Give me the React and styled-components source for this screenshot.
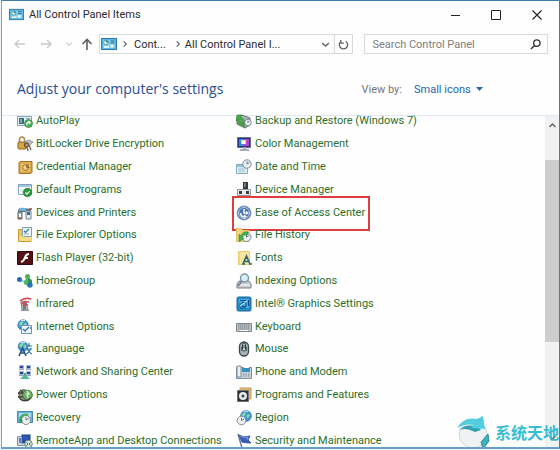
import React from "react";
import styled, { createGlobalStyle } from "styled-components";

const GlobalStyle = createGlobalStyle`
  *, *::before, *::after { box-sizing: border-box; }
  body {
    margin: 0;
    background: #f1f5f8;
    font-family: Roboto, "Open Sans", sans-serif;
    font-size: 11px;
    color: #333;
  }
  button, input, select { font: inherit; color: inherit; }
`;

const Window = styled.main`
  position: relative;
  display: flex;
  flex-direction: column;
  height: calc(100vh - 1px);
  margin: 0 0 1px 1px;
  border: 1px solid #3f7fad;
  border-left-color: #69a5ce;
  border-bottom-width: 2px;
  border-bottom-color: #65a0c9;
  background: #fefefe;
  overflow: hidden;
`;

const TitleBar = styled.header`
  display: flex;
  align-items: center;
  flex: none;
  height: 27px;
  padding-left: 7px;
  gap: 5px;
`;

const Title = styled.span`
  flex: 1;
  color: #2b2b2b;
`;

const Controls = styled.div`
  display: flex;
  margin-right: 1px;
`;

const IconButton = styled.button`
  display: flex;
  align-items: center;
  justify-content: center;
  flex: none;
  width: ${(p) => p.$width}px;
  height: 19px;
  padding: 0;
  border: 0;
  border-left: ${(p) => (p.$divided ? "1px solid #d9d9d9" : "0")};
  background: none;
  color: ${(p) => p.$color || "#666"};
`;

const NavBar = styled.nav`
  display: flex;
  align-items: center;
  flex: none;
  height: 32px;
  padding: 0 11px 0 8px;
`;

const Address = styled.div`
  display: flex;
  align-items: center;
  flex: 252 1 0;
  height: 20px;
  margin-left: 1px;
  padding-left: 1px;
  border: 1px solid #d9d9d9;
`;

const Crumb = styled.button`
  padding: 0 6px 0 1px;
  border: 0;
  background: none;
  color: #2b2b2b;
  white-space: nowrap;
`;

const Spacer = styled.span`
  flex: 1;
`;

const Search = styled.label`
  display: flex;
  align-items: center;
  flex: 169 1 0;
  min-width: 0;
  height: 20px;
  margin-left: 11px;
  padding: 0 6px 0 7px;
  border: 1px solid #d9d9d9;
`;

const SearchInput = styled.input`
  flex: 1;
  min-width: 0;
  padding: 0;
  border: 0;
  outline: 0;
  background: none;
  &::placeholder { color: #7d7d7d; opacity: 1; }
`;

const Heading = styled.section`
  display: flex;
  align-items: center;
  flex: none;
  height: 55px;
  padding: 3px 76px 0 15px;
`;

const PageTitle = styled.h1`
  flex: 1;
  margin: 0;
  color: #2a4d93;
  font-family: "Open Sans", "Noto Sans", sans-serif;
  font-size: 14px;
  font-weight: 400;
  line-height: 20px;
`;

const ViewLabel = styled.label`
  display: flex;
  align-items: center;
  gap: 12px;
  color: #757575;
`;

const ViewSelect = styled.select`
  appearance: none;
  padding: 0;
  border: 0;
  background: none;
  color: #2765ad;
`;

const Body = styled.section`
  display: flex;
  flex: 1;
  min-height: 0;
  border-top: 1px solid #e0eaf3;
`;

const Items = styled.ul`
  display: grid;
  grid-auto-flow: column;
  grid-template-columns: 219px 1fr;
  grid-template-rows: repeat(15, 1fr);
  flex: 1;
  height: 342px;
  margin: -6px 0 0;
  padding: 0 0 0 15px;
  list-style: none;
`;

const Item = styled.li`
  position: relative;
  display: flex;
  align-items: center;
`;

const ItemLink = styled.a`
  display: flex;
  align-items: center;
  gap: 3px;
  color: #2c6f2c;
  line-height: 16px;
  text-decoration: none;
  white-space: nowrap;
`;

const Highlight = styled.span`
  position: absolute;
  top: -5px;
  left: -4px;
  width: 138px;
  height: 35px;
  border: 2px solid #df3c3f;
  pointer-events: none;
`;

const Glyph = styled.svg`
  display: block;
  flex: none;
`;

const Scrollbar = styled.div`
  display: flex;
  flex-direction: column;
  align-items: center;
  width: 14px;
  background: #f1f1f1;
`;

const Thumb = styled.div`
  flex: 183 1 0;
  align-self: stretch;
  background: #cdcdcd;
`;

const Track = styled.div`
  flex: ${(p) => p.$grow} 1 0;
`;

const Watermark = styled.div`
  position: absolute;
  right: 0;
  bottom: -2px;
  display: flex;
  align-items: center;
  gap: 5px;
  color: #38bdd2;
  font-family: "Noto Sans CJK SC", sans-serif;
  font-size: 16px;
  font-weight: 700;
  line-height: 34px;
`;

const Check = ({ x, y, r = 4 }) => (
  <g>
    <circle cx={x} cy={y} r={r} fill="#24983b" stroke="#137026" strokeWidth=".5" />
    <path d={`M${x - 2} ${y}l1.5 1.6 2.7-3`} fill="none" stroke="#fff" strokeWidth="1.2" />
  </g>
);

const Clock = ({ x, y, r }) => (
  <g>
    <circle cx={x} cy={y} r={r} fill="#edf1f4" stroke="#7e8d98" />
    <path d={`M${x} ${y - r + 1.5}V${y}l${r - 1.8}-1.5`} fill="none" stroke="#566671" strokeWidth=".9" />
  </g>
);

const Globe = ({ x, y, r }) => (
  <g>
    <circle cx={x} cy={y} r={r} fill="#3f9bd5" stroke="#2b6da8" strokeWidth=".7" />
    <path d={`M${x - r + 1} ${y - 1}l2-2.5 2.5.5-1 2-1.5 2zM${x + 1} ${y - 1}l2-1 .8 1.5-1.8 2.5-1.5-1z`} fill="#90d7a5" />
    <path d={`M${x - 2} ${y - r + 1}q2-1 4 0`} stroke="#d9f2fc" fill="none" />
  </g>
);

const art = {
  panel: (
    <>
      <rect x=".5" y="2.5" width="15" height="11" fill="#55b7e4" stroke="#347ca5" />
      <path d="M2 4h12v8H2z" fill="#81d0f0" />
      <circle cx="5" cy="6.5" r="2.3" fill="#e7f6db" stroke="#307e9e" strokeWidth=".7" />
      <path d="M5 6.500V4.200a2.300 2.300 0 0 1 2.300 2.300z" fill="#258c84" />
      <path d="M9.500 5h4M9.500 7h4" stroke="#275f83" />
      <circle cx="11" cy="10" r="1.500" fill="#fff" />
      <path d="M3 11h5" stroke="#fff" strokeWidth="1.500" />
    </>
  ),
  autoplay: (
    <>
      <path d="M.5 3.500h14v9H.5z" fill="#eaf0f3" stroke="#8ca0aa" />
      <path d="M2 5h5v6H2z" fill="#3c657f" />
      <path d="M3 6h2v4H3z" fill="#72b2b5" />
      <path d="M9 5.500h4M9 7.500h3" stroke="#8ba6b7" />
      <circle cx="11.500" cy="10.500" r="4" fill="#48ac56" stroke="#23783a" strokeWidth=".6" />
      <path d="M10 12.500c-1-3 1-4 3-3m-1.500-1.500 2 1.500-1.800 1.600" fill="none" stroke="#fff" strokeWidth="1.100" />
    </>
  ),
  bitlocker: (
    <>
      <path d="M2.500 7V4q0-3 2.500-3t2.500 3v3" fill="none" stroke="#ac8c48" strokeWidth="1.600" />
      <rect x="1" y="6" width="8" height="7" rx="1" fill="#d8a63a" stroke="#8e641e" />
      <path d="m7 6 5-2 4 2-4 4-4-2z" fill="#bac0c5" stroke="#787f87" strokeWidth=".7" />
      <circle cx="9.500" cy="9" r="2" fill="none" stroke="#76562f" strokeWidth="1.300" />
      <path d="m10 11 1 4m1-6 2 5" stroke="#6f685f" strokeWidth="1.400" />
    </>
  ),
  credential: (
    <>
      <path d="M3 2.500h12v11l-2 1H2v-11z" fill="#d7a748" stroke="#a57527" />
      <path d="M4 4.500h9v8H4z" fill="#eac777" />
      <circle cx="8.500" cy="8.500" r="3" fill="none" stroke="#a17024" />
      <path d="m8.500 8.500 3-3M8.500 8.500h4" stroke="#865a19" strokeWidth="1.200" />
      <circle cx="8.500" cy="8.500" r="1" fill="#fff0be" />
    </>
  ),
  defaults: (
    <>
      <path d="M1.500 2.500h13v10h-13z" fill="#f8fbfe" stroke="#83a0b6" />
      <path d="M2 3h12v2H2z" fill="#9fc8e5" />
      <path d="M3 7h4v3H3z" fill="#e4ebef" />
      <path d="M9 7h4" stroke="#d58d67" />
      <Check x={10.5} y={10.5} r={4.3} />
    </>
  ),
  devices: (
    <>
      <path d="M1 5q1-3 6-2l7 1v3H1z" fill="#5e7481" />
      <path d="M2 3h7v3H2z" fill="#6bb1d9" />
      <path d="M1 7h4v7H1z" fill="#b9c1c7" stroke="#59646c" />
      <path d="M2 9h2v4H2z" fill="#fff" />
      <path d="M9 6h5v8H9z" fill="#e6ecef" stroke="#71818c" />
      <path d="M10 7h3v3h-3z" fill="#356f9c" />
      <path d="M1 13h3M12 4h3" stroke="#a04b45" strokeWidth="1.500" />
    </>
  ),
  explorer: (
    <>
      <path d="M1.500 2.500h5l1 2H14v10H1.500z" fill="#ecc75d" stroke="#c99c32" />
      <path d="M5.500.500h9v9h-9z" fill="#f1f8ff" stroke="#7ba0bc" />
      <path d="m7 4 1.500 1.500L12 2" fill="none" stroke="#3175b6" strokeWidth="1.200" />
      <path d="M7 7h5" stroke="#94aab8" />
      <path d="M2 9h4l1 1h7v4H2z" fill="#f6dc83" />
    </>
  ),
  flash: (
    <>
      <path d="M.5 1.500h15v13H.5z" fill="#541214" stroke="#35090d" />
      <path d="M12 4q-3 0-4 3.500T4 12M7 8h4" fill="none" stroke="#fff" strokeWidth="2" />
    </>
  ),
  homegroup: (
    <>
      <path d="m3 7 6 2 2-5" fill="none" stroke="#8fd0dc" strokeWidth="1.500" />
      <circle cx="2.500" cy="6.500" r="2.500" fill="#2868b8" />
      <circle cx="10.500" cy="3.500" r="2.500" fill="#4fae58" />
      <path d="m7 8 4-4 4 3v5l-4 1-4-2z" fill="#4fb768" />
      <path d="m11 5 4 3v5l-4-2z" fill="#2c8f5a" />
      <circle cx="13" cy="12" r="2.700" fill="#2874b6" />
    </>
  ),
  infrared: (
    <>
      <path d="m4 6 5-1 2 9H5z" fill="#b6c0c6" stroke="#7e8992" />
      <path d="m6 6 3-1v8l-3 1z" fill="#6c7a83" />
      <path d="M3 5q5-4 11-2M4 8q4-3 8-2M6 10q2-2 5-1" fill="none" stroke="#d64b55" strokeWidth="1.700" />
      <path d="M4 14.500h8" stroke="#8e979e" />
    </>
  ),
  internet: (
    <>
      <Globe x={6} y={6} r={5.2} />
      <path d="M4.500 6.500h10v8h-10z" fill="#edf6fb" stroke="#7294aa" />
      <path d="m6 10 2 2 4-4" fill="none" stroke="#3978b4" strokeWidth="1.400" />
      <path d="m13 8 1 1-1 1" stroke="#6789a1" />
    </>
  ),
  language: (
    <>
      <Globe x={6} y={5.5} r={4.8} />
      <path d="m2 15 3.500-8L9 15M3.500 12h4" fill="none" stroke="#244e80" strokeWidth="1.500" />
      <path d="M9 5h6M12 2v4M9 8h6m-5-1q2 5 5 6m-1-6q-2 5-5 6" fill="none" stroke="#3875aa" strokeWidth="1.200" />
    </>
  ),
  network: (
    <>
      <path d="M2.500 1.500h4v3h-4zm7 0h4v3h-4zm-7 6h4v3h-4zm7 0h4v3h-4z" fill="#2c3f96" stroke="#a8b8dc" />
      <path d="M2 5.500h5m2 0h5M2 11.500h5m2 0h5" stroke="#9aa6bb" />
      <path d="M8 9v5" stroke="#38a177" strokeWidth="2" />
      <path d="m8 10 5 5H3z" fill="#58b795" />
    </>
  ),
  power: (
    <>
      <path d="M2 5q4-4 8-1l1 7-5 3-4-3z" fill="#8c9a80" stroke="#455e4b" />
      <circle cx="10.500" cy="8" r="4.800" fill="#6fae6c" stroke="#417c45" />
      <path d="M1 6h5m-5 4h5M3 12q6 4 11-1M3 3l3 2" fill="none" stroke="#443f36" strokeWidth="1.500" />
      <path d="m10 4 2 3h-2l1 4" fill="none" stroke="#d8f0c8" strokeWidth="1.400" />
    </>
  ),
  recovery: (
    <>
      <path d="M.5 1.500h15v11H.5z" fill="#63b7df" stroke="#4987ac" />
      <path d="M2 3h12v4H2z" fill="#a6dcf1" />
      <Clock x={9} y={10} r={4.5} />
      <path d="M5 12C1 8 6 3 11 5" fill="none" stroke="#4baa56" strokeWidth="2" />
      <path d="m3 8 3 3-4 1z" fill="#339545" />
    </>
  ),
  remote: (
    <>
      <path d="M.5 3.500h8v9h-8z" fill="#cfdae6" stroke="#7690a6" />
      <path d="M2 5h5v5H2z" fill="#667fa0" />
      <path d="M4.500 1.500h9v9h-9z" fill="#234aa1" stroke="#8da2b9" />
      <path d="M6 3h5v4H6z" fill="#2f57c0" />
      <circle cx="11.500" cy="11" r="3.800" fill="#d7e2dc" stroke="#6d8c79" />
      <path d="m9.500 9.500 1.500 1.500-1.500 1.500m4-3-1.500 1.500 1.500 1.500" fill="none" stroke="#377b46" />
    </>
  ),
  backup: (
    <>
      <path d="m1 6 5-4 8 3v7l-5 3-8-4z" fill="#a9b3b4" stroke="#65706d" />
      <path d="m1 6 8 4v5l-8-4z" fill="#529a4d" />
      <path d="M1 2h5L4 4q5 2 5 7-3-5-7-5L0 8z" fill="#3eb344" stroke="#22782c" strokeWidth=".6" />
      <Clock x={12} y={9.5} r={3.3} />
    </>
  ),
  color: (
    <>
      <path d="M1.500 1.500h13v10h-13z" fill="#26318c" stroke="#666f8c" />
      <path d="M3 3h5v7H3z" fill="#2f8fe0" />
      <path d="M8 3h5v7H8z" fill="#b647cf" />
      <path d="M5 4h5v4H5z" fill="#efdd55" />
      <path d="M6 5h3v3H6z" fill="#fff" />
      <path d="M7 11h3v2h3v2H4v-2h3z" fill="#a4acb5" />
    </>
  ),
  date: (
    <>
      <path d="M.5 5.500h11v9H.5z" fill="#e7f4fa" stroke="#83adc0" />
      <path d="M1 6h10v2H1z" fill="#8fc3db" />
      <path d="M2 10h8M2 12h8M4 8v6M7 8v6" stroke="#accbd8" />
      <Clock x={11} y={5} r={4.2} />
    </>
  ),
  device: (
    <>
      <path d="M7 0h5v7H7z" fill="#303940" />
      <path d="M8 1h2v4H8z" fill="#6b7782" />
      <path d="M1.500 7.500h13v6h-13z" fill="#e8eaec" stroke="#8d969b" />
      <path d="M3 9h3v3H3zm7 0h3v3h-3z" fill="#343b3e" />
      <path d="M6 14h4" stroke="#868e94" strokeWidth="2" />
    </>
  ),
  ease: (
    <>
      <circle cx="8" cy="8" r="7" fill="#3761a9" stroke="#8a9fc2" />
      <circle cx="8" cy="8" r="5.500" fill="#4a73b8" stroke="#c4d5ed" />
      <path d="M8 4v4h3M4.500 8q0 4 4.500 3.500" fill="none" stroke="#fff" strokeWidth="1.500" />
      <path d="m10 6 3 2-3 2zM8 9.500l3 2-3 2z" fill="#fff" />
    </>
  ),
  history: (
    <>
      <path d="M.5 1.500h5l1 2H13v11H.5z" fill="#f3d57b" stroke="#e3c063" />
      <Clock x={10.5} y={10} r={4.5} />
      <path d="M12 5Q7 4 5 8.500L3 7.500v7l5-3-2-1q1-3 6-3z" fill="#42b54a" stroke="#298334" strokeWidth=".6" />
    </>
  ),
  fonts: (
    <>
      <path d="M2.500 1.500h11v13h-11z" fill="#f4db78" stroke="#e6cc6c" />
      <path d="M4 2h9v12H4z" fill="#f9e7a0" />
      <path d="m7 14 3.500-8L14 14M8 11.500h5M6 14h3m4 0h3" fill="none" stroke="#316a75" strokeWidth="1.700" />
    </>
  ),
  indexing: (
    <>
      <path d="m1 11 2-3h10l2 3v4H1z" fill="#c7cdd2" stroke="#79828a" />
      <path d="M2 12h12" stroke="#fff" />
      <circle cx="8.500" cy="5" r="4" fill="#d8eefb" stroke="#7b95a9" strokeWidth="1.400" />
      <path d="m6 8-4 5" stroke="#7a8290" strokeWidth="2" />
    </>
  ),
  intel: (
    <>
      <rect x="1" y="1" width="14" height="14" rx="1.500" fill="#208dce" stroke="#23628e" />
      <path d="M3 3h10v9H3z" fill="#46aee0" />
      <path d="M4 4.500h6M12.500 4v6M4 7v5h6M6 6.500h4v4H6z" fill="none" stroke="#174c86" />
      <path d="m4 10 7-5" stroke="#bff3ff" />
    </>
  ),
  keyboard: (
    <>
      <path d="M.5 4.500h15v8H.5z" fill="#c5cbd0" stroke="#7c858b" />
      <path d="M2 6h12M2 8h12M2 10h12" stroke="#68737a" strokeDasharray="1.500 .5" />
      <path d="M4 11.500h8" stroke="#f7f9fa" />
    </>
  ),
  mouse: (
    <>
      <rect x="3.500" y="1" width="9" height="14" rx="4.500" fill="#aab3b8" stroke="#38454e" strokeWidth="1.300" />
      <rect x="6.500" y="2" width="3" height="8" rx="1.500" fill="#e3e8ea" stroke="#263640" />
      <path d="M8 3.500v4" stroke="#263640" />
      <path d="M5.500 6v4M10.500 6v4" stroke="#56646c" />
    </>
  ),
  phone: (
    <>
      <path d="M.5 3.500h15v11H.5z" fill="#cad5dc" stroke="#8190a0" />
      <path d="M1 2h4v11H1z" fill="#eaf0f3" stroke="#7a8a98" />
      <path d="M6 4h8v4H6z" fill="#3a91b8" />
      <path d="M7 10h7M7 12h7" stroke="#72828f" strokeDasharray="1.500 1" />
      <path d="M8 2h5v2H8z" fill="#fff" />
    </>
  ),
  programs: (
    <>
      <path d="M4 1h11v11H4z" fill="#e0ba72" stroke="#c99b5c" />
      <path d="M1.500 3.500h11v11h-11z" fill="#2a3033" stroke="#6d7376" />
      <circle cx="7" cy="9" r="4" fill="#e4e8e9" />
      <circle cx="7" cy="9" r="1.500" fill="#3f484b" />
    </>
  ),
  region: (
    <>
      <Globe x={10} y={6} r={5.4} />
      <Clock x={5.5} y={10.5} r={4.3} />
    </>
  ),
  security: (
    <>
      <path d="m2 1 4 14" stroke="#687c9f" strokeWidth="1.500" />
      <path d="m3 2 5 2 6-1-2 4 3 3q-5 0-9-1z" fill="#315cb8" stroke="#3a53a8" />
      <path d="m4 3 5 2 3-1-1 3" fill="none" stroke="#789ae5" />
    </>
  ),
};

const Icon = ({ name, size = 16 }) => (
  <Glyph width={size} height={size} viewBox="0 0 16 16" aria-hidden="true">
    {art[name]}
  </Glyph>
);

const Line = ({ d, size = 12, weight = 1.3 }) => (
  <Glyph width={size} height={size} viewBox="0 0 12 12" fill="none" stroke="currentColor" strokeWidth={weight} aria-hidden="true">
    <path d={d} />
  </Glyph>
);

const items = [
  ["AutoPlay", "autoplay"],
  ["BitLocker Drive Encryption", "bitlocker"],
  ["Credential Manager", "credential"],
  ["Default Programs", "defaults"],
  ["Devices and Printers", "devices"],
  ["File Explorer Options", "explorer"],
  ["Flash Player (32-bit)", "flash"],
  ["HomeGroup", "homegroup"],
  ["Infrared", "infrared"],
  ["Internet Options", "internet"],
  ["Language", "language"],
  ["Network and Sharing Center", "network"],
  ["Power Options", "power"],
  ["Recovery", "recovery"],
  ["RemoteApp and Desktop Connections", "remote"],
  ["Backup and Restore (Windows 7)", "backup"],
  ["Color Management", "color"],
  ["Date and Time", "date"],
  ["Device Manager", "device"],
  ["Ease of Access Center", "ease"],
  ["File History", "history"],
  ["Fonts", "fonts"],
  ["Indexing Options", "indexing"],
  ["Intel® Graphics Settings", "intel"],
  ["Keyboard", "keyboard"],
  ["Mouse", "mouse"],
  ["Phone and Modem", "phone"],
  ["Programs and Features", "programs"],
  ["Region", "region"],
  ["Security and Maintenance", "security"],
];

export default function App() {
  return (
    <>
      <GlobalStyle />
      <Window>
        <TitleBar>
          <Icon name="panel" size={15} />
          <Title>All Control Panel Items</Title>
          <Controls>
            <IconButton $width={41} $color="#222" aria-label="Minimize"><Line d="M2 6.500h9" weight={1} /></IconButton>
            <IconButton $width={41} $color="#222" aria-label="Maximize"><Line d="M1.500 1.500h9v9h-9z" weight={1} /></IconButton>
            <IconButton $width={42} $color="#222" aria-label="Close"><Line d="m1.500 1.500 9 9m0-9-9 9" weight={1.1} /></IconButton>
          </Controls>
        </TitleBar>
        <NavBar>
          <IconButton $width={20} $color="#c9c9c9" aria-label="Back"><Line d="M11 6H1.500M5 2 1 6l4 4" /></IconButton>
          <IconButton $width={32} $color="#c9c9c9" aria-label="Forward"><Line d="M1 6h9.500M7 2l4 4-4 4" /></IconButton>
          <IconButton $width={14} $color="#c4c4c4" aria-label="Recent locations"><Line d="m2 4 4 4 4-4" size={8} weight={1.6} /></IconButton>
          <IconButton $width={22} $color="#606060" aria-label="Up"><Line d="M6 12V1.500M1.500 6 6 1.500 10.500 6" weight={1.6} /></IconButton>
          <Address>
            <Icon name="panel" />
            <IconButton $width={16} aria-label="Expand root"><Line d="m4 2 4 4-4 4" size={8} weight={1.8} /></IconButton>
            <Crumb>Cont...</Crumb>
            <IconButton $width={12} aria-label="Expand Control Panel"><Line d="m4 2 4 4-4 4" size={8} weight={1.8} /></IconButton>
            <Crumb>All Control Panel I...</Crumb>
            <Spacer />
            <IconButton $width={18} aria-label="Previous locations"><Line d="m1.500 4 4.500 4 4.500-4" size={9} weight={2} /></IconButton>
            <IconButton $width={18} $divided aria-label="Refresh"><Line d="M8.500 2.500a4.500 4.500 0 1 1-5 0M3 1v3.500h3.500" size={11} weight={1.5} /></IconButton>
          </Address>
          <Search>
            <SearchInput type="search" placeholder="Search Control Panel" aria-label="Search Control Panel" />
            <Line d="M5 7 1 11M11 4.500a3.500 3.500 0 1 1-7 0 3.500 3.500 0 0 1 7 0" size={11} weight={1.5} />
          </Search>
        </NavBar>
        <Heading>
          <PageTitle>Adjust your computer's settings</PageTitle>
          <ViewLabel>
            View by:
            <ViewSelect defaultValue="small">
              <option value="small">Small icons</option>
            </ViewSelect>
          </ViewLabel>
          <Glyph width="12" height="8" viewBox="0 0 12 8" aria-hidden="true">
            <path d="M5 2h7L8.500 6z" fill="#2765ad" />
          </Glyph>
        </Heading>
        <Body>
          <Items>
            {items.map(([label, icon]) => (
              <Item key={label}>
                <ItemLink href="#">
                  <Icon name={icon} />
                  {label}
                </ItemLink>
                {icon === "ease" && <Highlight />}
              </Item>
            ))}
          </Items>
          <Scrollbar>
            <IconButton $width={14} aria-label="Scroll up"><Line d="m2 8 4-4 4 4" size={9} weight={2} /></IconButton>
            <Track $grow={25} />
            <Thumb />
            <Track $grow={86} />
            <IconButton $width={14} aria-label="Scroll down"><Line d="m2 4 4 4 4-4" size={9} weight={2} /></IconButton>
          </Scrollbar>
        </Body>
        <Watermark>
          <Glyph width="34" height="34" viewBox="0 0 34 34" aria-hidden="true">
            <circle cx="17" cy="19" r="14" fill="#eef2f3" stroke="#cbd5d8" />
            <path d="M4 15Q9 8 22 12l3 3-6 2Q9 12 4 15" fill="#2f9fb4" />
            <path d="M1 13Q8 1 21 4l6-3 2 13-14-1 3-3Q9 8 1 13" fill="#53cde0" />
            <path d="m25 27 7-8 1 7-6 8z" fill="#3faebd" stroke="#2c8fa0" />
          </Glyph>
          系统天地
        </Watermark>
      </Window>
    </>
  );
}
